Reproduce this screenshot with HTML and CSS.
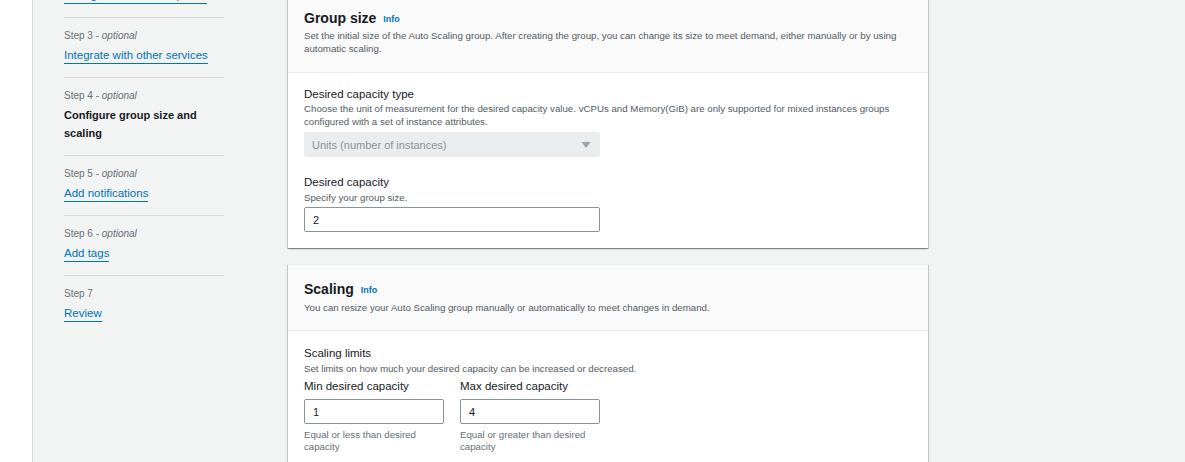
FILE: index.html
```html
<!DOCTYPE html>
<html>
<head>
<meta charset="utf-8">
<link rel="stylesheet" href="styles.css">
</head>
<body>
<div class="page">
  <div class="leftstrip"></div>
  <div class="layout">
    <nav class="steps">
      <div class="step step-top"><a class="link" href="#">Configure advanced options</a></div>
      <div class="step">
        <div class="step-label">Step 3 - <i>optional</i></div>
        <a class="link" href="#">Integrate with other services</a>
      </div>
      <div class="step">
        <div class="step-label">Step 4 - <i>optional</i></div>
        <div class="current">Configure group size and scaling</div>
      </div>
      <div class="step">
        <div class="step-label">Step 5 - <i>optional</i></div>
        <a class="link" href="#">Add notifications</a>
      </div>
      <div class="step">
        <div class="step-label">Step 6 - <i>optional</i></div>
        <a class="link" href="#">Add tags</a>
      </div>
      <div class="step step-last">
        <div class="step-label">Step 7</div>
        <a class="link" href="#">Review</a>
      </div>
    </nav>
    <main class="main">
      <section class="card card-first">
        <header class="card-header card-header-1">
          <h2 class="card-title">Group size <span class="info">Info</span></h2>
          <p class="card-desc">Set the initial size of the Auto Scaling group. After creating the group, you can change its size to meet demand, either manually or by using automatic scaling.</p>
        </header>
        <div class="card-body">
          <div class="field">
            <div class="label">Desired capacity type</div>
            <div class="desc">Choose the unit of measurement for the desired capacity value. vCPUs and Memory(GiB) are only supported for mixed instances groups configured with a set of instance attributes.</div>
            <div class="select">
              <span>Units (number of instances)</span>
              <svg class="caret" width="10" height="8" viewBox="0 0 10 8"><path d="M0.5 1 L9.5 1 L5 7 Z" fill="#95a5a6"/></svg>
            </div>
          </div>
          <div class="field field-2">
            <div class="label">Desired capacity</div>
            <div class="desc">Specify your group size.</div>
            <div class="input wide">2</div>
          </div>
        </div>
      </section>
      <section class="card card-second">
        <header class="card-header card-header-2">
          <h2 class="card-title">Scaling <span class="info">Info</span></h2>
          <p class="card-desc">You can resize your Auto Scaling group manually or automatically to meet changes in demand.</p>
        </header>
        <div class="card-body card-body-2">
          <div class="label">Scaling limits</div>
          <div class="desc">Set limits on how much your desired capacity can be increased or decreased.</div>
          <div class="limits">
            <div class="limit">
              <div class="label">Min desired capacity</div>
              <div class="input small">1</div>
              <div class="help">Equal or less than desired capacity</div>
            </div>
            <div class="limit">
              <div class="label">Max desired capacity</div>
              <div class="input small">4</div>
              <div class="help">Equal or greater than desired capacity</div>
            </div>
          </div>
        </div>
      </section>
    </main>
  </div>
</div>
</body>
</html>
```
FILE: styles.css
```css
* { box-sizing: border-box; }
html, body { margin: 0; padding: 0; }
body {
  font-family: "Liberation Sans", Arial, sans-serif;
  color: #16191f;
  background: #f2f3f3;
  width: 1185px;
  height: 462px;
  overflow: hidden;
}
.page { display: flex; height: 462px; }
.leftstrip { width: 33px; flex: none; background: #ffffff; border-right: 1px solid #d5dbdb; }
.layout { display: flex; flex: 1; }
.steps { width: 255px; flex: none; padding-left: 31px; margin-top: -42px; }
.step {
  width: 160px;
  border-bottom: 1px solid #d5dbdb;
  padding: 10px 0 13px;
}
.step-last { border-bottom: none; }
.step-top { padding: 0 0 13px; height: 60px; display: flex; align-items: flex-end; }
.step-label { font-size: 10px; color: #687078; line-height: 16px; }
.step-label i { font-style: italic; }
.link {
  display: inline-block;
  font-size: 11.5px;
  line-height: 16px;
  color: #0073bb;
  text-decoration: none;
  border-bottom: 1px solid #0073bb;
  margin-top: 3px;
}
.current { font-size: 11px; font-weight: bold; line-height: 18px; margin-top: 2px; }
.main { width: 640px; flex: none; }
.card {
  background: #fff;
  box-shadow: 0 1px 1px 0 rgba(0,28,36,.3), 1px 1px 1px 0 rgba(0,28,36,.15), -1px 1px 1px 0 rgba(0,28,36,.15);
}
.card-first { margin-top: -10px; }
.card-second { margin-top: 16px; border-top: 1px solid #eaeded; }
.card-header {
  background: #fafafa;
  border-bottom: 1px solid #eaeded;
  padding: 17px 16px 16px;
}
.card-header-1 .card-desc { margin-top: -1px; }
.card-header-1 { padding-bottom: 17px; }
.card-header-2 { padding: 13px 16px 16px; }
.card-title { margin: 0; font-size: 14px; font-weight: bold; line-height: 22px; }
.info { font-size: 9px; font-weight: bold; color: #0073bb; margin-left: 3px; vertical-align: 1px; }
.card-desc { margin: 0; font-size: 9.7px; line-height: 13px; color: #545b64; }
.card-body { padding: 13px 16px 16px; }
.card-body-2 { padding: 14px 16px 10px; }
.label { font-size: 11.5px; line-height: 16px; color: #16191f; }
.desc { font-size: 9.7px; line-height: 13px; color: #545b64; }
.field-2 .desc, .card-body-2 > .desc { margin-top: 1px; }
.select {
  margin-top: 4px;
  width: 296px;
  height: 25px;
  background: #eaeded;
  border-radius: 2px;
  display: flex;
  align-items: center;
  justify-content: space-between;
  padding: 0 9px 0 8px;
  font-size: 11px;
  color: #879596;
}
.field-2 { margin-top: 17px; }
.input {
  margin-top: 3px;
  height: 25px;
  border: 1px solid #879596;
  border-radius: 2px;
  background: #fff;
  font-size: 11px;
  display: flex;
  align-items: center;
  padding-left: 8px;
}
.input.wide { width: 296px; }
.limits { display: flex; gap: 16px; margin-top: 3px; }
.limit { width: 140px; }
.limit .input { margin-top: 5px; width: 140px; }
.help { font-size: 9.7px; line-height: 12px; color: #687078; margin-top: 5px; width: 140px; }
```
